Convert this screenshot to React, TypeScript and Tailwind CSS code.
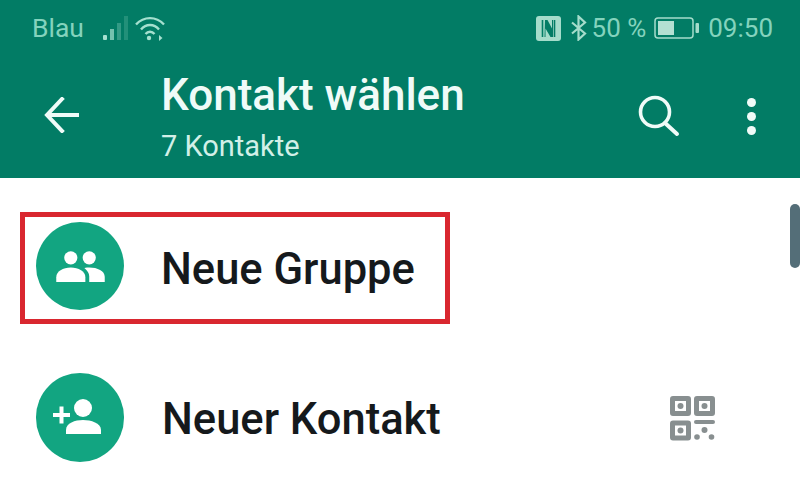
export default function App() {
  return (
    <div className="relative flex h-[488px] w-[800px] flex-col overflow-hidden bg-white font-['Roboto',sans-serif]">
      <header className="flex h-[178px] shrink-0 flex-col bg-[#027c65]">
        <div className="flex h-[56px] shrink-0 items-center pl-[32px] pr-[27px] text-[26.500px] text-[#84d3bd]">
          <span>Blau</span>
          <svg className="ml-[17px]" width="30" height="28" viewBox="0 0 30 28">
            <rect x="2" y="21" width="4" height="5" rx="1" fill="#a5e0cf" />
            <rect x="9" y="15" width="4" height="11" fill="#a5e0cf" opacity=".7" />
            <rect x="16" y="9" width="4" height="17" fill="#a5e0cf" opacity=".3" />
            <rect x="23" y="2" width="4" height="24" fill="#a5e0cf" opacity=".2" />
          </svg>
          <svg className="ml-[3px]" width="32" height="28" viewBox="0 0 32 28" fill="none" stroke="#a5e0cf" strokeWidth="2.400">
            <path d="M2 10.500C10 2 22 2 30 10.500" />
            <path d="M7 15.500C12 9.500 20 9.500 25 15.500" />
            <path d="M11.500 20C14 17 18 17 20.500 20" />
            <circle cx="15" cy="24" r="2.200" fill="#a5e0cf" stroke="none" />
            <path d="M25 21v6l3.500-3z" fill="#a5e0cf" stroke="none" />
          </svg>
          <div className="ml-auto flex items-center text-[26px]">
            <svg width="25" height="25" viewBox="0 0 25 25">
              <rect width="25" height="25" rx="3" fill="#a5dccb" />
              <path d="M6.500 4v17M18.500 4v17" stroke="#027c65" strokeWidth="1.600" fill="none" />
              <path d="M9 4h2.500l4.500 8.500V4h1v17h-2.500L9.500 12.500V21H8.500z" fill="#027c65" />
            </svg>
            <svg className="ml-[9px]" width="17" height="26" viewBox="0 0 17 26" fill="none" stroke="#a5dccb" strokeWidth="2.200">
              <path d="M2 7.500l13 11-6.500 6V1.500l6.500 6-13 11" />
            </svg>
            <span className="ml-[5px]">50 %</span>
            <svg className="ml-[8px]" width="46" height="24" viewBox="0 0 46 24" fill="none">
              <rect x="1" y="2" width="38" height="20" rx="3" stroke="#a5dccb" strokeWidth="1.500" />
              <rect x="4" y="5" width="16" height="14" fill="#b3e0d2" />
              <rect x="41.500" y="7" width="3.500" height="10" rx="1" fill="#a5dccb" />
            </svg>
            <span className="ml-[8px]">09:50</span>
          </div>
        </div>
        <div className="flex flex-1 items-center">
          <svg className="mb-[4px] ml-[44px]" width="37" height="36" viewBox="0 0 37 36" fill="none" stroke="#f0fbf8" strokeWidth="4" strokeLinecap="square">
            <path d="M18 2L3 18l15 16" />
            <path d="M4 18h31" strokeLinecap="butt" />
          </svg>
          <div className="ml-[80px] flex w-[304px] shrink-0 flex-col">
            <span className="whitespace-nowrap text-[44px] font-medium leading-[46px] text-[#effbf8]">Kontakt wählen</span>
            <span className="mt-[12px] whitespace-nowrap text-[29px] leading-[32px] text-[#d2f0e8]">7 Kontakte</span>
          </div>
          <svg className="mb-[2px] ml-[173px]" width="42" height="42" viewBox="0 0 42 42" fill="none" stroke="#f0fbf8" strokeWidth="3.600">
            <circle cx="17" cy="17" r="14.500" />
            <path d="M27 28l12 11" strokeLinecap="round" strokeWidth="4" />
          </svg>
          <div className="mb-[2px] ml-[67px] flex flex-col gap-[5px]">
            <div className="h-[9px] w-[9px] rounded-full bg-[#f0fbf8]" />
            <div className="h-[9px] w-[9px] rounded-full bg-[#f0fbf8]" />
            <div className="h-[9px] w-[9px] rounded-full bg-[#f0fbf8]" />
          </div>
        </div>
      </header>
      <main className="flex flex-col">
        <div className="ml-[20px] mt-[34px] flex h-[112px] w-[430px] items-center border-[5px] border-[#d9272f] pl-[11px]">
          <div className="mb-[4px] flex h-[88px] w-[88px] items-center justify-center rounded-full bg-[#12a581]">
            <svg className="mt-[1px]" width="51" height="32" viewBox="0 0 52 33" fill="#fff">
              <circle cx="16" cy="7" r="6.800" />
              <circle cx="35" cy="7" r="6.800" />
              <path d="M1 32v-5c0-6 7-10 15-10s15 4 15 10v5z" />
              <path d="M30 17.500c2-.4 3.500-.5 5-.5 8.500 0 16 3.500 16 9.500v5.500H35v-6c0-3-2-6-5-8.500z" />
            </svg>
          </div>
          <span className="ml-[37px] mt-[3px] text-[43.500px] font-medium text-[#15191c]">Neue Gruppe</span>
        </div>
        <div className="ml-[36px] mt-[49px] flex items-center">
          <div className="flex h-[89px] w-[88px] items-center justify-center rounded-full bg-[#12a581]">
            <svg className="ml-[-4px] mb-[1px]" width="50" height="36" viewBox="0 0 50 36" fill="#fff">
              <circle cx="30" cy="9" r="9" />
              <path d="M13 35v-4c0-7 9-10 17-10s18 3 18 10v4z" />
              <rect x="0" y="14" width="17" height="4" />
              <rect x="6.500" y="7.500" width="4" height="17" />
            </svg>
          </div>
          <span className="ml-[38px] mt-[4px] whitespace-nowrap text-[43.500px] font-medium text-[#15191c]">Neuer Kontakt</span>
          <svg className="ml-[228px] mt-[1px] shrink-0" width="46" height="46" viewBox="0 0 46 46" fill="#888f90">
            <path fillRule="evenodd" d="M3 0h15a3 3 0 0 1 3 3v14a3 3 0 0 1-3 3H3a3 3 0 0 1-3-3V3a3 3 0 0 1 3-3zM5 5v10h11V5z" transform="translate(1 1)" />
            <path fillRule="evenodd" d="M3 0h15a3 3 0 0 1 3 3v14a3 3 0 0 1-3 3H3a3 3 0 0 1-3-3V3a3 3 0 0 1 3-3zM5 5v10h11V5z" transform="translate(25 1)" />
            <path fillRule="evenodd" d="M3 0h15a3 3 0 0 1 3 3v14a3 3 0 0 1-3 3H3a3 3 0 0 1-3-3V3a3 3 0 0 1 3-3zM5 5v10h11V5z" transform="translate(1 25.500)" />
            <circle cx="11.500" cy="11" r="3" />
            <circle cx="35.500" cy="11" r="3" />
            <circle cx="11.500" cy="35.500" r="3" />
            <rect x="25" y="25" width="21" height="4" rx="2" />
            <circle cx="35.500" cy="35" r="3" />
            <circle cx="28" cy="42" r="2.800" />
            <circle cx="42.500" cy="42" r="2.800" />
          </svg>
        </div>
      </main>
      <div className="absolute right-0 top-[204px] h-[64px] w-[10px] rounded-[5px] bg-[#546e78]" />
    </div>
  );
}
